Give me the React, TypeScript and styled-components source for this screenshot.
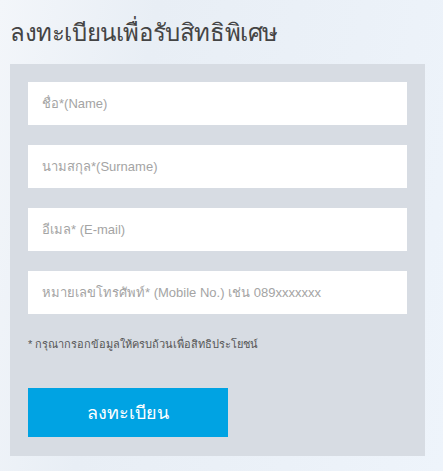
import styled, { createGlobalStyle } from 'styled-components';

const Global = createGlobalStyle`
  html, body {
    margin: 0;
    padding: 0;
  }
  body {
    width: 443px;
    height: 471px;
    overflow: hidden;
    background: linear-gradient(100deg, #f3f6fa 0%, #e8eef5 30%, #ebf1f8 70%, #eef4fb 100%);
    font-family: "Liberation Sans", Arial, sans-serif;
  }
`;

const Page = styled.div`
  padding: 14px 18px 0 10px;
`;

const Title = styled.h1`
  margin: 0 0 14px;
  font-size: 24px;
  line-height: 36px;
  font-weight: 300;
  letter-spacing: -0.4px;
  color: #444;
  font-family: "Noto Sans", "Liberation Sans", sans-serif;
`;

const Panel = styled.form`
  background: #d7dce3;
  padding: 18px 18px 19px;
  display: flex;
  flex-direction: column;
`;

const Fields = styled.div`
  display: flex;
  flex-direction: column;
  gap: 20px;
`;

const Field = styled.input`
  box-sizing: border-box;
  width: 379px;
  height: 43px;
  border: none;
  outline: none;
  background: #fff;
  padding: 0 14px;
  font-family: "Liberation Sans", Arial, sans-serif;
  font-size: 13px;
  color: #333;

  &::placeholder {
    color: #a4a4a4;
  }
`;

const Note = styled.p`
  margin: 22px 0 0;
  font-size: 11px;
  line-height: 16px;
  color: #555;
`;

const Submit = styled.button`
  margin-top: 36px;
  width: 200px;
  height: 49px;
  border: none;
  background: #00a3e3;
  color: #fff;
  font-size: 18px;
  font-family: "Noto Sans", "Liberation Sans", sans-serif;
  cursor: pointer;
`;

const fields = [
  'ชื่อ*(Name)',
  'นามสกุล*(Surname)',
  'อีเมล* (E-mail)',
  'หมายเลขโทรศัพท์* (Mobile No.) เช่น 089xxxxxxx',
];

export default function App() {
  return (
    <>
      <Global />
      <Page>
        <Title>ลงทะเบียนเพื่อรับสิทธิพิเศษ</Title>
        <Panel onSubmit={(e) => e.preventDefault()}>
          <Fields>
            {fields.map((f) => (
              <Field key={f} placeholder={f} />
            ))}
          </Fields>
          <Note>* กรุณากรอกข้อมูลให้ครบถ้วนเพื่อสิทธิประโยชน์</Note>
          <Submit type="submit">ลงทะเบียน</Submit>
        </Panel>
      </Page>
    </>
  );
}
